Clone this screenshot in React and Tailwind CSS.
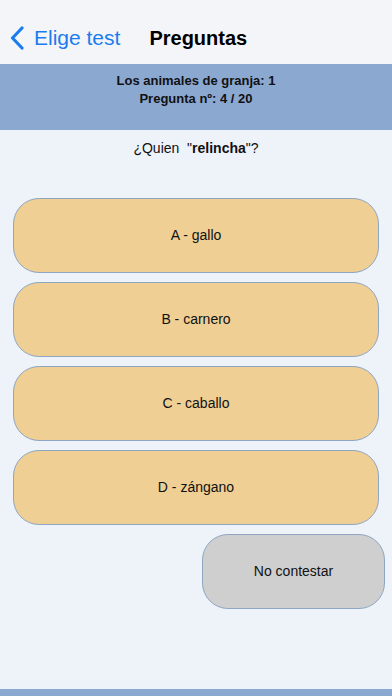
const options = ['A - gallo', 'B - carnero', 'C - caballo', 'D - zángano'];

export default function App() {
  return (
    <div className="w-[392px] h-[696px] bg-[#eef3fa] flex flex-col overflow-hidden" style={{ fontFamily: '"Liberation Sans", Arial, sans-serif' }}>
      {/* nav bar */}
      <div className="h-[64px] shrink-0 bg-[#f3f5f8] flex items-end pb-[12px]">
        <div className="flex items-center pl-[10px]">
          <svg width="14" height="24" viewBox="0 0 14 24" className="mr-[10px]">
            <path d="M12 2 L2.5 12 L12 22" fill="none" stroke="#1b7cf0" strokeWidth="3.2" strokeLinecap="round" strokeLinejoin="round" />
          </svg>
          <span className="text-[21px] leading-[28px] text-[#1b7cf0]">Elige test</span>
        </div>
        <span className="ml-[29px] text-[20px] leading-[28px] font-bold text-black">Preguntas</span>
      </div>

      {/* header band */}
      <div className="h-[66px] shrink-0 bg-[#8ba8d1] flex flex-col items-center pt-[8px] text-[13px] leading-[18px] font-bold text-[#111]">
        <span>Los animales de granja: 1</span>
        <span>Pregunta nº: 4 / 20</span>
      </div>

      <div className="h-[36px] flex items-center justify-center text-[14px] text-[#111]">
        <span>¿Quien&nbsp;&nbsp;"<b>relincha</b>"?</span>
      </div>

      <div className="flex flex-col gap-[9px] px-[13px] mt-[32px]">
        {options.map(o => (
          <button key={o} className="h-[75px] w-full rounded-[26px] bg-[#efcf94] border border-[#8fa6c2] text-[14px] text-[#111]">
            {o}
          </button>
        ))}
      </div>

      <div className="flex justify-end pr-[7px] mt-[9px]">
        <button className="w-[183px] h-[75px] rounded-[26px] bg-[#cfcfcf] border border-[#8fa6c2] text-[14px] text-[#111]">
          No contestar
        </button>
      </div>

      <div className="flex-1" />
      <div className="h-[7px] shrink-0 bg-[#8ba8d1]" />
    </div>
  );
}
